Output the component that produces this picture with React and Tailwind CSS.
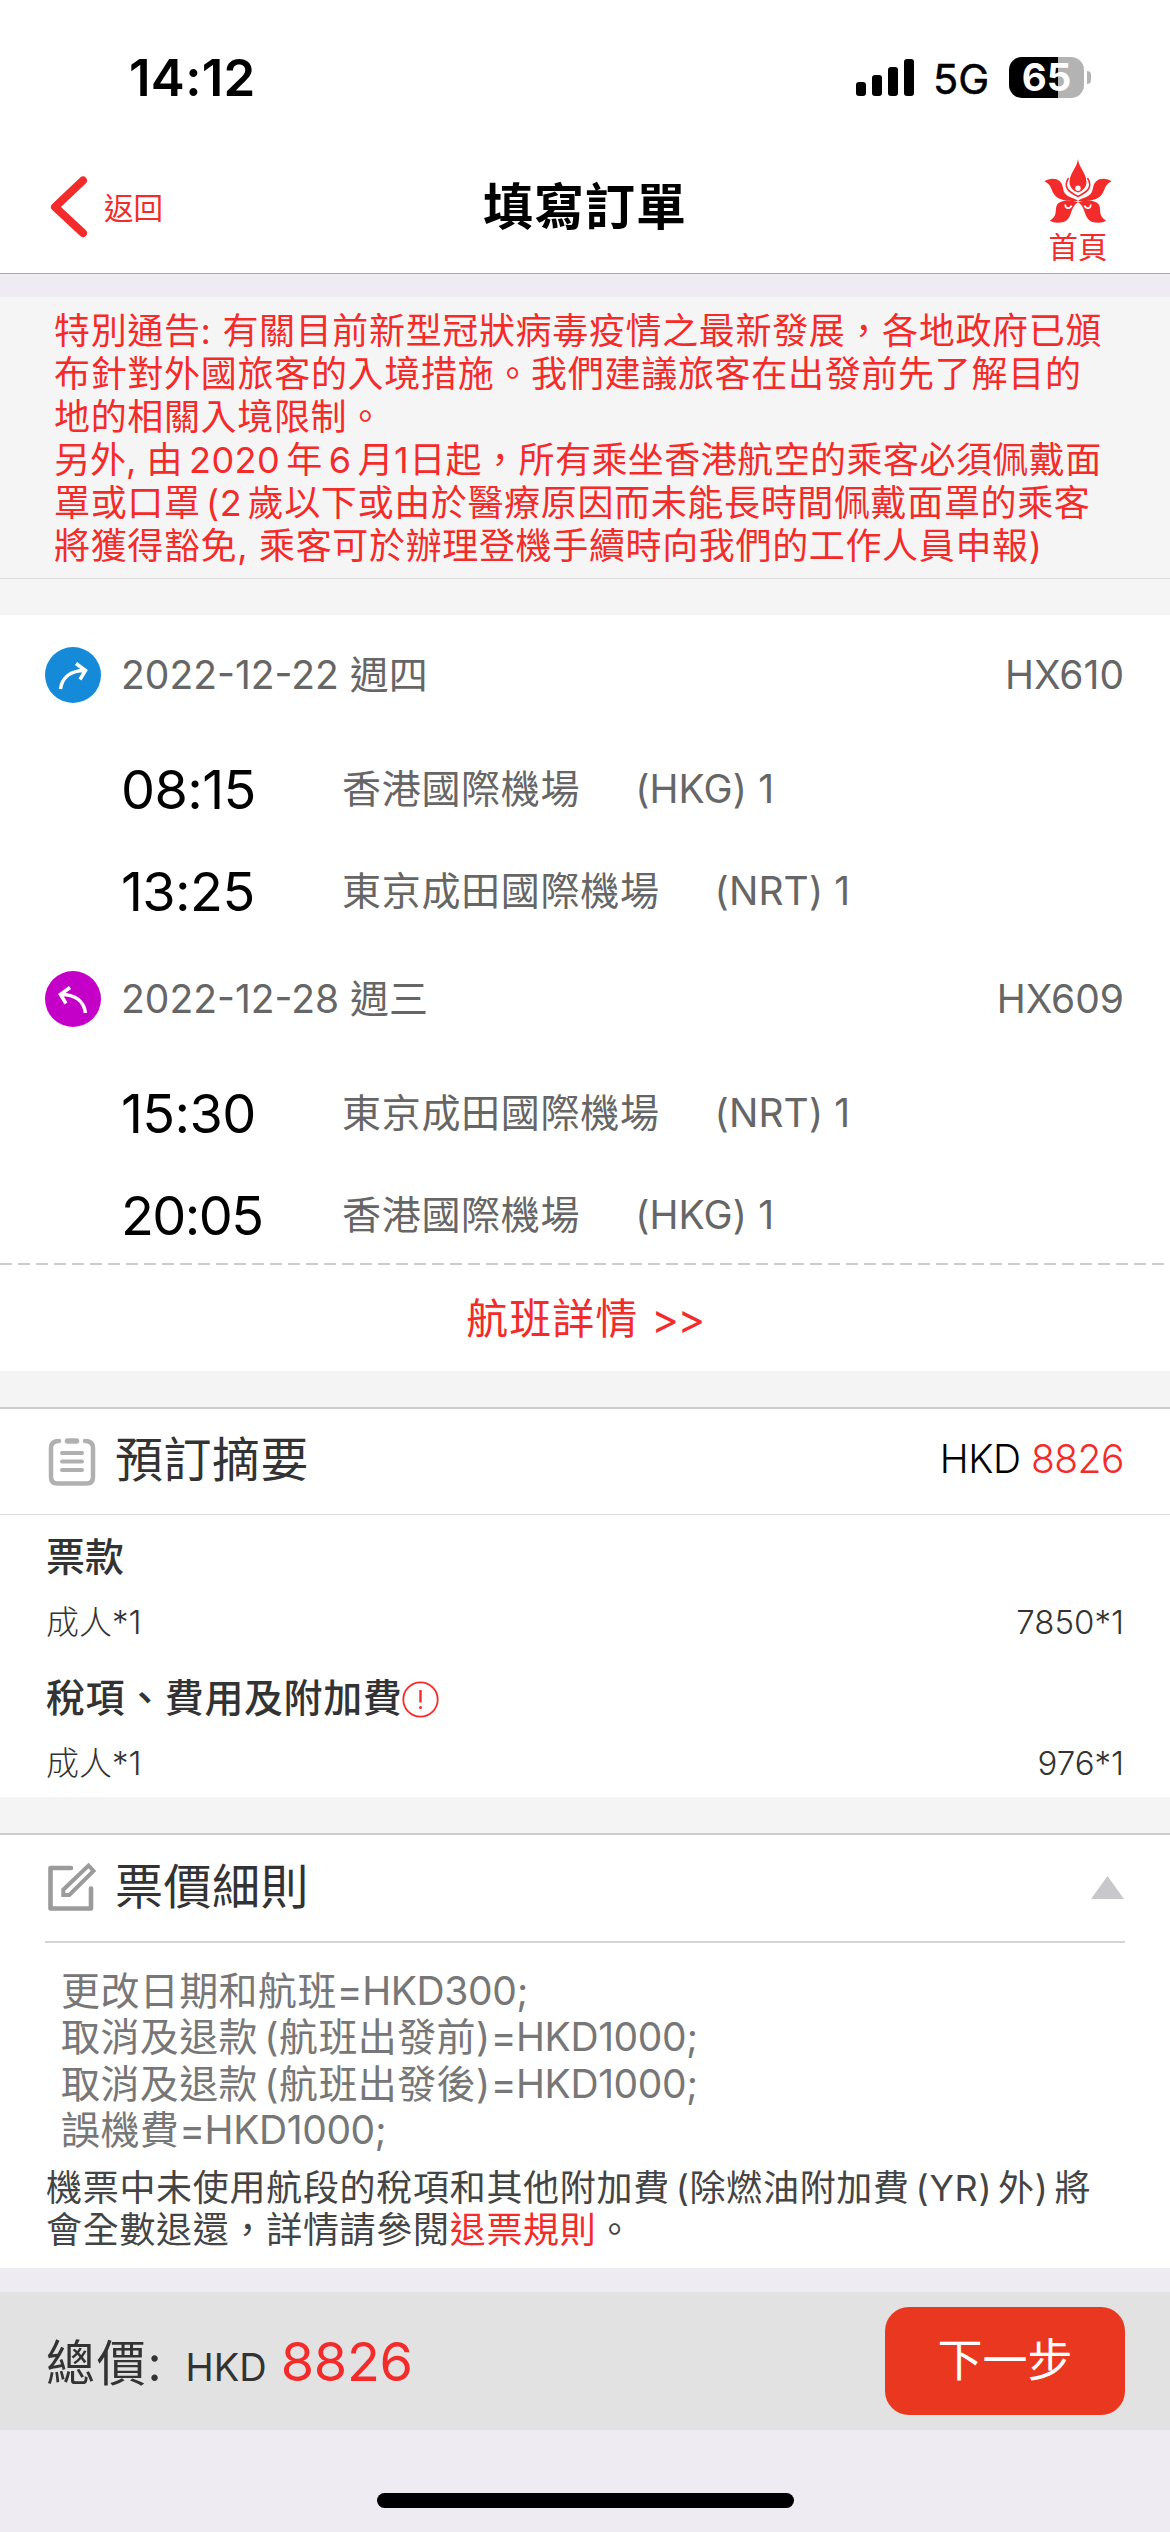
const NOTICE = [
  { t: '特別通告: 有關目前新型冠狀病毒疫情之最新發展，各地政府已頒', c: 'tracking-[0.65px]' },
  { t: '布針對外國旅客的入境措施。我們建議旅客在出發前先了解目的', c: 'tracking-[0.7px]' },
  { t: '地的相關入境限制。', c: 'tracking-[0.65px]' },
  { lead: '另外, ', t: '由 2020 年 6 月1日起，所有乘坐香港航空的乘客必須佩戴面', c: 'tracking-[0.45px] [word-spacing:-4.5px]' },
  { t: '罩或口罩 (2 歲以下或由於醫療原因而未能長時間佩戴面罩的乘客', c: 'tracking-[0.65px] [word-spacing:-5.5px]' },
  { t: '將獲得豁免, 乘客可於辦理登機手續時向我們的工作人員申報)', c: 'tracking-[0.65px]' },
];

const RULES = [
  ['更改日期和航班', '=HKD300;'],
  ['取消及退款 (航班出發前)', '=HKD1000;'],
  ['取消及退款 (航班出發後)', '=HKD1000;'],
  ['誤機費', '=HKD1000;'],
];

function StatusBar() {
  return (
    <div className="flex h-[156px] items-start justify-between pl-[129px] pr-[79px]">
      <div className="mt-[48px] text-[51px] leading-[60px] font-semibold tracking-[0.3px] text-black">14:12</div>
      <div className="mt-[57px] flex h-[41px] items-center">
        <div className="flex items-end gap-[6px] pb-px">
          <i className="h-[14px] w-[10px] rounded-[3px] bg-black" />
          <i className="h-[21px] w-[10px] rounded-[3px] bg-black" />
          <i className="h-[29px] w-[10px] rounded-[3px] bg-black" />
          <i className="h-[37px] w-[10px] rounded-[3px] bg-black" />
        </div>
        <div className="mt-[3px] ml-[19px] w-[76px] text-[41.5px] leading-[41px] text-black [-webkit-text-stroke:0.5px_black]">5G</div>
        <div className="flex h-[41px] w-[75px] items-center justify-center rounded-[13px] bg-linear-to-r from-black from-[65%] to-[#b3b3b3] to-[65%] text-[38.5px] leading-[41px] font-bold text-white">
          65
        </div>
        <i className="ml-[3px] h-[13px] w-[4px] rounded-r-full bg-[#b3b3b3]" />
      </div>
    </div>
  );
}

function Petals() {
  return (
    <g>
      <path d="M0.500 22.500C4 19.500 12 18.500 16 22.500C20 26.500 18 31 21.500 35C25 39 30 38.500 34 42C28 42.500 17 42 12 37.500C6.500 32.500 8 25 0.500 22.500Z" />
      <path d="M34 43C24 41 14.500 41 12.500 47C11 52 13.500 57 6 61.500C9 64.500 20 65 24 60C28 55 27 48 34 43Z" />
    </g>
  );
}

function Flower() {
  return (
    <svg className="h-[66px] w-[68px]" viewBox="0 0 68 66" fill="#f42b2b">
      <Petals />
      <g transform="translate(68 0) scale(-1 1)"><Petals /></g>
      <path d="M34 0C35 9 42.500 14 42.500 23C42.500 28 39 32 34 33.500C29 32 25.500 28 25.500 23C25.500 14 33 9 34 0Z" />
      <path d="M24.500 19C18 28 23 34 34 38.500C45 34 50 28 43.500 19" fill="none" stroke="#fff" strokeWidth="4" />
      <path d="M24.500 19C19 28 24 32.500 34 37.500C44 32.500 49 28 43.500 19" fill="none" stroke="#f42b2b" strokeWidth="1.500" />
      <circle cx="34" cy="29.300" r="2.700" fill="#fff" />
      <path d="M21.500 45.500C20.500 49.500 26 50.500 27.500 46.500M46.500 45.500C47.500 49.500 42 50.500 40.500 46.500" fill="none" stroke="#fff" strokeWidth="1.800" />
    </svg>
  );
}

function Header() {
  return (
    <header className="grid h-[118px] grid-cols-[1fr_auto_1fr] border-b border-[#a7a6ab]">
      <div className="flex items-start pl-[49px] text-[#f42b2b]">
        <svg className="mt-[19px] h-[64px] w-[40px]" viewBox="0 0 40 64" fill="none" stroke="currentColor" strokeWidth="8" strokeLinecap="round" strokeLinejoin="round">
          <path d="M34 5.500L6 32L34 58" />
        </svg>
        <span className="mt-[32px] ml-[15px] text-[29.5px] leading-[40px]">返回</span>
      </div>
      <h1 className="mt-[21px] text-[50px] leading-[60px] font-bold tracking-[1px] text-black">填寫訂單</h1>
      <div className="mr-[58px] flex flex-col items-center justify-self-end pt-[3px] text-[#f42b2b]">
        <Flower />
        <span className="mt-[2px] text-[29.5px] leading-[40px]">首頁</span>
      </div>
    </header>
  );
}

function Leg({ color, flip, date, no, stops }) {
  return (
    <div>
      <div className="flex h-[120px] items-center pr-[46px] pl-[45px] text-[39px] text-[#666]">
        <svg className={flip ? 'size-[56px] -scale-x-100' : 'size-[56px]'} viewBox="0 0 56 56" fill="none">
          <circle cx="28" cy="28" r="28" fill={color} />
          <path d="M15.500 42C17 31 25 23.500 40 23.500M31 16.500L40.500 23.500L35 32.500" stroke="#fff" strokeWidth="3.500" />
        </svg>
        <span className="ml-[20px]">{date}</span>
        <span className="ml-auto">{no}</span>
      </div>
      <div className="pt-[3px] pl-[121px]">
        {stops.map((s) => (
          <div key={s.time} className="flex h-[102px] items-center">
            <span className={s.wide ? 'w-[221px] text-[54px] tracking-[-1.6px] text-black' : 'w-[221px] text-[54px] tracking-[-0.6px] text-black'}>{s.time}</span>
            <span className="text-[39px] tracking-[0.700px] text-[#666]">{s.place}</span>
            <span className="ml-[55px] text-[39px] tracking-[0.100px] text-[#666]">{s.code}</span>
          </div>
        ))}
      </div>
    </div>
  );
}

function Row({ value }) {
  return (
    <div className="flex h-[66px] items-center justify-between text-[33px] font-light text-[#333] [font-feature-settings:'calt'_0]">
      <span>成人*1</span>
      <span>{value}</span>
    </div>
  );
}

export default function App() {
  return (
    <div className="flex h-[2532px] w-[1170px] flex-col overflow-hidden bg-[#eeebf2] font-['Inter','Noto_Sans_CJK_TC',sans-serif] whitespace-nowrap">
      <div className="bg-white">
        <StatusBar />
        <Header />
      </div>

      <section className="mt-[23px] h-[282px] border-b border-[#ddd] bg-[#f5f5f5] pt-[13px] pl-[54px] text-[36px] leading-[43px] text-[#f42b2b]">
        {NOTICE.map((l) => (
          <p key={l.t}>{l.lead}<span className={l.c}>{l.t}</span></p>
        ))}
      </section>
      <div className="h-[36px] bg-[#f5f5f5]" />

      <section className="h-[756px] bg-white">
        <Leg color="#148ad8" date="2022-12-22 週四" no="HX610" stops={[
          { time: '08:15', place: '香港國際機場', code: '(HKG) 1' },
          { time: '13:25', place: '東京成田國際機場', code: '(NRT) 1' },
        ]} />
        <div className="-mt-[3px]">
          <Leg flip color="#c400c8" date="2022-12-28 週三" no="HX609" stops={[
            { time: '15:30', place: '東京成田國際機場', code: '(NRT) 1' },
            { time: '20:05', place: '香港國際機場', code: '(HKG) 1', wide: true },
          ]} />
        </div>
        <div className="-mt-[3px] h-[2px] bg-[repeating-linear-gradient(90deg,#ccc_0_12px,transparent_12px_18px)]" />
        <div className="flex h-[106px] items-center justify-center text-[42px] text-[#f42b2b]">
          <span className="tracking-[1px]">航班詳情</span>
          <span className="ml-[13px] tracking-[-1.5px]">&gt;&gt;</span>
        </div>
      </section>
      <div className="h-[36px] bg-[#f4f4f4]" />

      <section className="h-[390px] border-t-2 border-[#ccc] bg-white">
        <div className="flex h-[106px] items-center border-b border-[#ddd] pr-[46px] pl-[48px]">
          <svg className="size-[48px]" viewBox="0 0 48 48" fill="none" stroke="#b0b0b0" strokeLinecap="round">
            <path d="M11 3Q3 3 3 10V39Q3 45.500 9.500 45.500H38.500Q45 45.500 45 39V10Q45 3 37 3" strokeWidth="4.500" />
            <path d="M19.500 3H28.500" strokeWidth="5.500" />
            <path d="M14 15H34M14 23.500H34M14 32H34" strokeWidth="4" />
          </svg>
          <h2 className="mb-[3px] ml-[19px] text-[48px] leading-[60px] tracking-[0.500px] text-[#333]">預訂摘要</h2>
          <span className="mb-[5px] ml-auto text-[39px] font-light tracking-[-0.500px] text-black">HKD <span className="text-[#f42b2b]">8826</span></span>
        </div>
        <div className="pr-[46px] pl-[46px]">
          <div className="flex h-[75px] items-end text-[39px] leading-[66px] font-medium text-[#333]">票款</div>
          <Row value="7850*1" />
          <div className="flex h-[75px] items-end text-[39px] leading-[66px] font-medium tracking-[0.600px] text-[#333]">
            稅項、費用及附加費
            <svg className="mb-[13px] size-[37px]" viewBox="0 0 37 37" fill="none" stroke="#f42b2b" strokeWidth="1.800">
              <circle cx="18.500" cy="18.500" r="17.200" />
              <path d="M18.500 9V21.500" strokeWidth="2.400" />
              <circle cx="18.500" cy="26.500" r="1.500" fill="#f42b2b" stroke="none" />
            </svg>
          </div>
          <Row value="976*1" />
        </div>
      </section>
      <div className="h-[36px] bg-[#f4f4f4]" />

      <section className="h-[435px] border-t-2 border-[#ccc] bg-white">
        <div className="mx-[45px] flex h-[108px] items-center border-b-2 border-[#d4d4d4]">
          <svg className="mb-[2px] ml-[3px] size-[48px] overflow-visible" viewBox="0 0 48 48" fill="none" stroke="#9b9b9b" strokeLinecap="round" strokeLinejoin="round">
            <path d="M23 5H2.500V45.500H43V25.500" strokeWidth="4.600" />
            <path d="M15.300 32V26.700L40.500 2.500L45.500 8L21.300 32Z" strokeWidth="4" strokeLinejoin="miter" />
          </svg>
          <h2 className="mb-[2px] ml-[19px] text-[48px] leading-[60px] tracking-[0.500px] text-[#333]">票價細則</h2>
          <svg className="mb-[2px] mr-px ml-auto h-[23px] w-[33px]" viewBox="0 0 33 23" fill="#c8c7cc"><path d="M16.500 0L33 23H0Z" /></svg>
        </div>
        <div className="mt-[25px] pl-[61px] text-[39px] leading-[46.400px] tracking-[0.400px] text-[#777]">
          {RULES.map(([name, fee]) => (
            <p key={name}><span className="[word-spacing:-5px]">{name}</span><span className="tracking-[-0.400px]">{fee}</span></p>
          ))}
        </div>
        <div className="mt-[13px] pl-[46px] text-[36px] leading-[42px] tracking-[0.700px] text-[#444]">
          <p className="[word-spacing:-5px]">機票中未使用航段的稅項和其他附加費 (除燃油附加費 (YR) 外) 將</p>
          <p>會全數退還，詳情請參閱<span className="text-[#f42b2b]">退票規則</span>。</p>
        </div>
      </section>

      <footer className="mt-[24px] flex h-[138px] items-center justify-between bg-[#e2e2e2] pr-[45px] pl-[46px]">
        <div className="flex items-baseline text-[#333]">
          <span className="text-[49px] tracking-[1.8px]">總價:</span>
          <span className="ml-[22px] text-[38px]">HKD</span>
          <span className="ml-[14px] text-[54px] tracking-[-0.300px] text-[#f42b2b]">8826</span>
        </div>
        <button className="h-[108px] w-[240px] rounded-[24px] bg-[#ea3820] text-[45px] text-white">下一步</button>
      </footer>
      <div className="mx-auto mt-[63px] h-[15px] w-[417px] rounded-full bg-black" />
    </div>
  );
}
